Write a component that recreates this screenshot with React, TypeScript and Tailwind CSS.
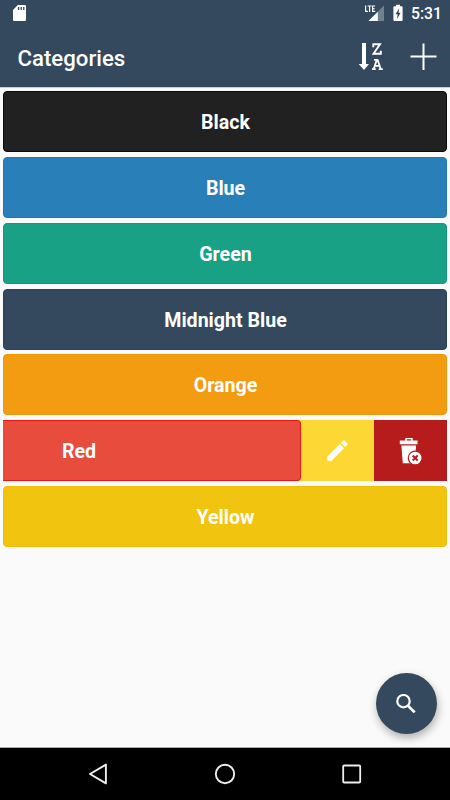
const categories = [
  { name: 'Black', color: 'bg-[#212121]', edge: 'border-[#0c0c0c]' },
  { name: 'Blue', color: 'bg-[#2980b9]', edge: 'border-[#2079b5]' },
  { name: 'Green', color: 'bg-[#18a185]', edge: 'border-[#109b7e]' },
  { name: 'Midnight Blue', color: 'bg-[#34495e]', edge: 'border-[#2b4158]' },
  { name: 'Orange', color: 'bg-[#f39c12]', edge: 'border-[#f09408]' },
  { name: 'Red', color: 'bg-[#e74c3c]', edge: 'border-[#ed1610]', open: true },
  { name: 'Yellow', color: 'bg-[#f1c40f]', edge: 'border-[#efbd05]' },
];

function StatusBar() {
  return (
    <div className="flex h-7 items-start justify-between">
      <svg className="mt-[5px] ml-[13px]" width="13" height="16" viewBox="0 0 13 16">
        <path d="M4.8 0H11.8Q13 0 13 1.2V14.8Q13 16 11.8 16H1.2Q0 16 0 14.8V5Z" fill="#fff" />
        <path d="M5.6 2V5M8.2 2V5M10.8 2V5" stroke="#34495e" strokeWidth="1.3" />
      </svg>
      <div className="flex items-start">
        <svg width="46" height="28" viewBox="0 0 46 28">
          <path d="M21 5.5V21H5.5Z" fill="#708090" />
          <path d="M14.8 11.7V21H5.5Z" fill="#fff" />
          <path d="M0 4H12.8V13H0Z" fill="#34495e" />
          <path d="M2.6 5.5V11.4H4.9M4.6 6H8.6M6.6 6V12M12.2 6H9.6V11.4H12.2M9.6 8.7H11.8" fill="none" stroke="#fff" strokeWidth="1.15" />
          <path d="M33 6.3V4.8H37V6.3H38.6Q39.6 6.3 39.6 7.3V20Q39.6 21 38.6 21H31.4Q30.4 21 30.4 20V7.3Q30.4 6.3 31.4 6.3Z" fill="#fff" />
          <path d="M36.2 8.2L32.5 14.2H34.6L34.1 19L37.6 12.8H35.5Z" fill="#34495e" />
        </svg>
        <span className="mr-[9px] ml-[2px] w-[30px] pt-[4px] text-[15.7px] leading-[20px] font-medium whitespace-nowrap">5:31</span>
      </div>
    </div>
  );
}

function Header() {
  return (
    <header className="h-[87px] bg-[#34495e] text-white">
      <StatusBar />
      <div className="flex h-[58px] items-center justify-between pr-[13px] pl-[17.5px]">
        <h1 className="pt-px text-[22.2px] leading-[28px] font-medium">Categories</h1>
        <div className="flex items-center gap-[27px]">
          <svg width="25" height="30" viewBox="0 0 25 30">
            <path d="M4 1H8V22H11L6 28L0.7 22H4Z" fill="#fff" />
            <path d="M15.3 5.2V2.2H22L15.5 11.8H22.8V8.8" fill="none" stroke="#fff" strokeWidth="1.9" />
            <path d="M15.7 27L18.7 18.2H19.7L22.7 27M16.5 23.8H21.8M16 17.9H19.7M14 27.1H17.8M20.8 27.1H24.8" fill="none" stroke="#fff" strokeWidth="1.8" />
          </svg>
          <svg width="27" height="28" viewBox="0 0 27 28">
            <path d="M13.5 .5V27M.5 13.5H26.5" stroke="#fff" strokeWidth="2" />
          </svg>
        </div>
      </div>
    </header>
  );
}

function SwipedRow({ name, color, edge }: { name: string; color: string; edge: string }) {
  return (
    <div className="flex h-[61px] bg-[#fdd835]">
      <div className={`flex w-[298px] items-center rounded-r border-y border-r pt-[3px] pl-[58.6px] ${edge} ${color}`}>{name}</div>
      <div className="flex w-[73px] items-center justify-center pr-px">
        <svg width="27" height="27" viewBox="0 0 24 24" fill="#fff">
          <path d="M3 17.25V21h3.75L17.81 9.94l-3.75-3.75L3 17.25zM20.71 7.04a1 1 0 0 0 0-1.41l-2.34-2.34a1 1 0 0 0-1.41 0l-1.83 1.83 3.75 3.75 1.83-1.83z" />
        </svg>
      </div>
      <div className="flex flex-1 items-center justify-center bg-[#b71c1c]">
        <svg width="24" height="28" viewBox="0 0 24 28">
          <path d="M6.3 .9H13.7V3.6H18.5V7.2H.8V3.6H6.3ZM7.8 2.2V3.6H12.2V2.2Z" fill="#fff" fillRule="evenodd" />
          <path d="M2.4 8.4H17L16 26.2H3.8Z" fill="#fff" />
          <circle cx="16.2" cy="21" r="6.9" fill="#fff" stroke="#b71c1c" strokeWidth="1.2" />
          <path d="M13.7 18.5L18.7 23.5M18.7 18.5L13.7 23.5" stroke="#b71c1c" strokeWidth="2" />
        </svg>
      </div>
    </div>
  );
}

export default function App() {
  return (
    <div className="relative flex h-[800px] w-[450px] flex-col bg-[#fafafa] font-['Roboto',sans-serif]">
      <Header />
      <main className="flex flex-1 flex-col gap-[4.85px] border-t border-[#c8ced4] px-[3.4px] pt-[3.1px] text-[19.6px] leading-6 font-bold text-white">
        {categories.map((item) =>
          item.open ? (
            <SwipedRow key={item.name} name={item.name} color={item.color} edge={item.edge} />
          ) : (
            <div key={item.name} className={`flex h-[61px] items-center justify-center rounded border pt-[3px] pl-px ${item.edge} ${item.color}`}>
              {item.name}
            </div>
          ),
        )}
      </main>
      <button className="absolute top-[673px] left-[375.5px] flex size-[61px] items-center justify-center rounded-full bg-[#34495e] pr-px shadow-[1px_4px_8px_rgba(0,0,0,0.3)]">
        <svg width="20" height="20" viewBox="0 0 20 20" fill="none" stroke="#fff">
          <circle cx="7.5" cy="7.2" r="6.2" strokeWidth="2.2" />
          <path d="M11.8 11.5L18.7 18.4" strokeWidth="2.7" />
        </svg>
      </button>
      <nav className="flex h-[53px] items-center justify-between border-t border-[#aaa] bg-black px-[88px]">
        <svg width="20" height="22" viewBox="0 0 20 22">
          <path d="M17.9 1.6V20.4L2 11Z" fill="none" stroke="#eee" strokeWidth="1.9" strokeLinejoin="round" />
        </svg>
        <svg width="22" height="22" viewBox="0 0 22 22">
          <circle cx="11" cy="11" r="9.2" fill="none" stroke="#eee" strokeWidth="1.9" />
        </svg>
        <svg width="20" height="20" viewBox="0 0 20 20">
          <rect x="1.2" y="1.5" width="17" height="17" rx="1" fill="none" stroke="#eee" strokeWidth="1.8" />
        </svg>
      </nav>
    </div>
  );
}
